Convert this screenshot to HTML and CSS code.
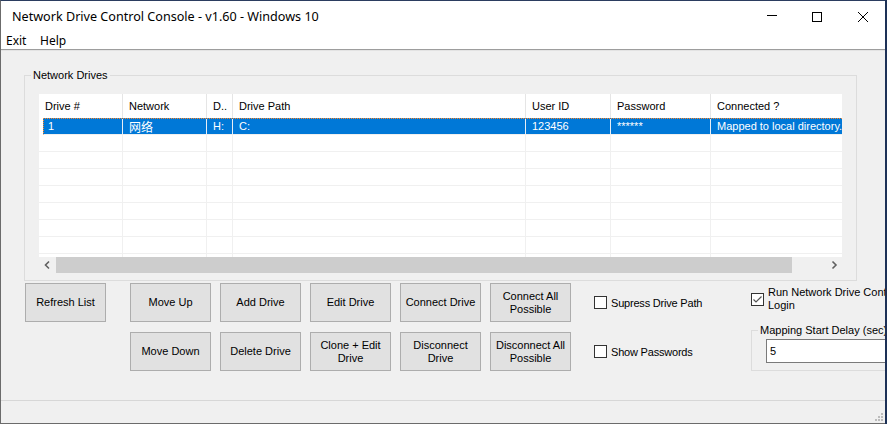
FILE: index.html
```html
<!DOCTYPE html>
<html>
<head>
<meta charset="utf-8">
<link rel="stylesheet" href="styles.css">
</head>
<body>
<div class="window">
  <div class="titlebar">
    <span class="title">Network Drive Control Console - v1.60 - Windows 10</span>
    <div class="controls">
      <span class="ctl"><svg width="46" height="29" viewBox="0 0 46 29"><path d="M20 14.5H30" stroke="#000" stroke-width="1"/></svg></span>
      <span class="ctl"><svg width="46" height="29" viewBox="0 0 46 29"><rect x="19.5" y="11.5" width="9" height="9" fill="none" stroke="#000" stroke-width="1"/></svg></span>
      <span class="ctl"><svg width="46" height="29" viewBox="0 0 46 29"><path d="M19 11L29 21M29 11L19 21" stroke="#000" stroke-width="1"/></svg></span>
    </div>
  </div>
  <div class="menubar">
    <span class="menu-item">Exit</span>
    <span class="menu-item">Help</span>
  </div>
  <div class="client">
    <fieldset class="group drives">
      <legend>Network Drives</legend>
      <div class="listview">
        <div class="lv-header">
          <div class="hcell c1">Drive #</div>
          <div class="hcell c2">Network</div>
          <div class="hcell c3">D..</div>
          <div class="hcell c4">Drive Path</div>
          <div class="hcell c5">User ID</div>
          <div class="hcell c6">Password</div>
          <div class="hcell c7">Connected ?</div>
        </div>
        <div class="lv-body">
          <div class="lv-row sel">
            <div class="cell c1">1</div>
            <div class="cell c2 cjk">网络</div>
            <div class="cell c3">H:</div>
            <div class="cell c4">C:</div>
            <div class="cell c5">123456</div>
            <div class="cell c6 pw">******</div>
            <div class="cell c7">Mapped to local directory.</div>
          </div>
          <div class="lv-row"><div class="cell c1"></div><div class="cell c2"></div><div class="cell c3"></div><div class="cell c4"></div><div class="cell c5"></div><div class="cell c6"></div><div class="cell c7"></div></div>
          <div class="lv-row"><div class="cell c1"></div><div class="cell c2"></div><div class="cell c3"></div><div class="cell c4"></div><div class="cell c5"></div><div class="cell c6"></div><div class="cell c7"></div></div>
          <div class="lv-row"><div class="cell c1"></div><div class="cell c2"></div><div class="cell c3"></div><div class="cell c4"></div><div class="cell c5"></div><div class="cell c6"></div><div class="cell c7"></div></div>
          <div class="lv-row"><div class="cell c1"></div><div class="cell c2"></div><div class="cell c3"></div><div class="cell c4"></div><div class="cell c5"></div><div class="cell c6"></div><div class="cell c7"></div></div>
          <div class="lv-row"><div class="cell c1"></div><div class="cell c2"></div><div class="cell c3"></div><div class="cell c4"></div><div class="cell c5"></div><div class="cell c6"></div><div class="cell c7"></div></div>
          <div class="lv-row"><div class="cell c1"></div><div class="cell c2"></div><div class="cell c3"></div><div class="cell c4"></div><div class="cell c5"></div><div class="cell c6"></div><div class="cell c7"></div></div>
          <div class="lv-row"><div class="cell c1"></div><div class="cell c2"></div><div class="cell c3"></div><div class="cell c4"></div><div class="cell c5"></div><div class="cell c6"></div><div class="cell c7"></div></div>
          <div class="lv-row"><div class="cell c1"></div><div class="cell c2"></div><div class="cell c3"></div><div class="cell c4"></div><div class="cell c5"></div><div class="cell c6"></div><div class="cell c7"></div></div>
        </div>
        <div class="hscroll">
          <span class="arrow"><svg width="17" height="16" viewBox="0 0 17 16"><path d="M10 4.5L6.5 8L10 11.5" fill="none" stroke="#606060" stroke-width="1.6"/></svg></span>
          <span class="thumb"></span>
          <span class="track"></span>
          <span class="arrow"><svg width="17" height="16" viewBox="0 0 17 16"><path d="M7.5 4.5L11 8L7.5 11.5" fill="none" stroke="#606060" stroke-width="1.6"/></svg></span>
        </div>
      </div>
    </fieldset>

    <div class="controls-area">
      <button class="btn refresh">Refresh List</button>
      <div class="btn-grid">
        <button class="btn">Move Up</button>
        <button class="btn">Add Drive</button>
        <button class="btn">Edit Drive</button>
        <button class="btn">Connect Drive</button>
        <button class="btn">Connect All<br>Possible</button>
        <button class="btn">Move Down</button>
        <button class="btn">Delete Drive</button>
        <button class="btn">Clone + Edit<br>Drive</button>
        <button class="btn">Disconnect<br>Drive</button>
        <button class="btn">Disconnect All<br>Possible</button>
      </div>
      <div class="check-col">
        <label class="check"><span class="box"></span><span class="check-text">Supress Drive Path</span></label>
        <label class="check"><span class="box"></span><span class="check-text">Show Passwords</span></label>
      </div>
      <div class="right-col">
        <label class="run">
          <span class="box checked"><svg width="11" height="11" viewBox="0 0 11 11"><path d="M1.5 5.5L4 8L9.5 2.5" fill="none" stroke="#555" stroke-width="1.2"/></svg></span>
          <span class="run-text">Run Network Drive Control Console on Login</span>
        </label>
        <fieldset class="group delay">
          <legend>Mapping Start Delay (sec)</legend>
          <div class="textbox">5</div>
        </fieldset>
      </div>
    </div>
  </div>
  <div class="statusbar">
    <svg class="grip" width="12" height="12" viewBox="0 0 12 12">
      <rect x="8" y="2" width="2" height="2" fill="#bcbcbc"/>
      <rect x="5" y="5" width="2" height="2" fill="#bcbcbc"/>
      <rect x="8" y="5" width="2" height="2" fill="#bcbcbc"/>
      <rect x="2" y="8" width="2" height="2" fill="#bcbcbc"/>
      <rect x="5" y="8" width="2" height="2" fill="#bcbcbc"/>
      <rect x="8" y="8" width="2" height="2" fill="#bcbcbc"/>
    </svg>
  </div>
</div>
</body>
</html>
```

FILE: styles.css
```css
* { box-sizing: border-box; }
html, body { margin: 0; padding: 0; }
body {
  background: #1d3157;
  width: 887px;
  height: 424px;
  overflow: hidden;
  font-family: "Liberation Sans", Arial, sans-serif;
  font-size: 11px;
  color: #000;
}
.window {
  width: 885px;
  height: 424px;
  border-top: 1px solid #2b3d60;
  border-left: 1px solid #6b6b6b;
  border-bottom: 1px solid #6b6b6b;
  background: #f0f0f0;
  display: flex;
  flex-direction: column;
  overflow: hidden;
}
.titlebar {
  height: 29px;
  flex: none;
  background: #fff;
  display: flex;
  align-items: center;
}
.title {
  flex: 1;
  padding-left: 11px;
  padding-top: 2px;
  font-family: "Noto Sans", sans-serif;
  font-size: 12.6px;
  color: #000;
  white-space: nowrap;
}
.controls { display: flex; align-self: stretch; }
.ctl { width: 46px; height: 29px; display: block; }
.ctl svg { display: block; }
.menubar {
  height: 20px;
  flex: none;
  background: #fff;
  border-bottom: 1px solid #9d9d9d;
  display: flex;
  align-items: center;
  padding-left: 5px;
  padding-top: 2px;
  font-family: "Noto Sans", sans-serif;
  font-size: 12px;
}
.menu-item { width: 34px; }
.client {
  flex: 1;
  min-height: 0;
  border-top: 1px solid #e3e3e3;
  padding-left: 23px;
  padding-top: 18px;
}
.group {
  margin: 0;
  border: 1px solid #dcdcdc;
  min-width: 0;
}
.group legend {
  padding: 0 2px;
  line-height: 13px;
  font-size: 11px;
}
.drives {
  width: 833px;
  padding: 0 13px 7px 6px;
}
.listview {
  margin: 12px 0 0 8px;
  width: 803px;
  height: 179px;
  background: #fff;
  overflow: hidden;
  display: flex;
  flex-direction: column;
}
.lv-header { display: flex; height: 24px; flex: none; }
.hcell {
  flex: none;
  height: 24px;
  line-height: 24px;
  padding-left: 6px;
  border-right: 1px solid #e5e5e5;
  white-space: nowrap;
  overflow: hidden;
}
.c1 { width: 84px; }
.c2 { width: 84px; }
.c3 { width: 26px; }
.c4 { width: 293px; }
.c5 { width: 85px; }
.c6 { width: 100px; }
.c7 { width: 200px; }
.lv-body { height: 139px; flex: none; overflow: hidden; }
.lv-row {
  display: flex;
  height: 17px;
  border-bottom: 1px solid #f0f0f0;
}
.cell {
  flex: none;
  line-height: 16px;
  padding-left: 6px;
  border-right: 1px solid #f0f0f0;
  white-space: nowrap;
  overflow: hidden;
}
.lv-row.sel {
  margin-left: 4px;
  background: #0078d7;
  color: #fff;
  border-top: 1px dotted #ff8728;
  border-left: 1px dotted #ff8728;
}
.lv-row.sel .cell { line-height: 15px; border-right-color: #e8eef5; }
.lv-row.sel .c1 { width: 79px; padding-left: 4px; }
.cjk { font-family: "Noto Sans CJK SC", sans-serif; font-size: 12px; }
.hscroll {
  flex: none;
  height: 16px;
  display: flex;
  background: #f0f0f0;
}
.arrow { width: 17px; flex: none; }
.arrow svg { display: block; }
.thumb { width: 736px; flex: none; background: #cdcdcd; }
.track { flex: 1; }
.controls-area {
  display: flex;
  margin-top: 2px;
}
.btn {
  flex: none;
  width: 81px;
  height: 39px;
  margin: 0;
  padding: 0;
  background: #e1e1e1;
  border: 1px solid #adadad;
  font-family: "Liberation Sans", Arial, sans-serif;
  font-size: 11px;
  line-height: 13px;
  color: #000;
}
.refresh { margin-left: 1px; }
.btn-grid {
  flex: none;
  margin-left: 24px;
  display: grid;
  grid-template-columns: repeat(5, 81px);
  grid-template-rows: 39px 39px;
  column-gap: 9px;
  row-gap: 10px;
}
.check-col {
  flex: none;
  margin-left: 23px;
  width: 157px;
  display: grid;
  grid-template-rows: 39px 39px;
  row-gap: 10px;
}
.check { display: flex; align-items: center; gap: 4px; }
.check-text { letter-spacing: -0.2px; }
.box {
  flex: none;
  width: 13px;
  height: 13px;
  border: 1px solid #333;
  background: #fff;
}
.box svg { display: block; }
.right-col { flex: none; width: 220px; display: flex; flex-direction: column; }
.run { display: flex; align-items: center; gap: 4px; margin-top: 3px; }
.run-text { width: 200px; flex: none; line-height: 13px; }
.delay {
  margin-top: 12px;
  width: 220px;
  padding: 0 0 7px 6px;
}
.textbox {
  margin: 2px 0 0 8px;
  width: 180px;
  height: 24px;
  border: 1px solid #7a7a7a;
  background: #fff;
  padding-left: 3px;
  line-height: 22px;
}
.statusbar {
  height: 23px;
  flex: none;
  border-top: 1px solid #d7d7d7;
  display: flex;
  justify-content: flex-end;
  align-items: flex-end;
}
.grip { display: block; }
```
